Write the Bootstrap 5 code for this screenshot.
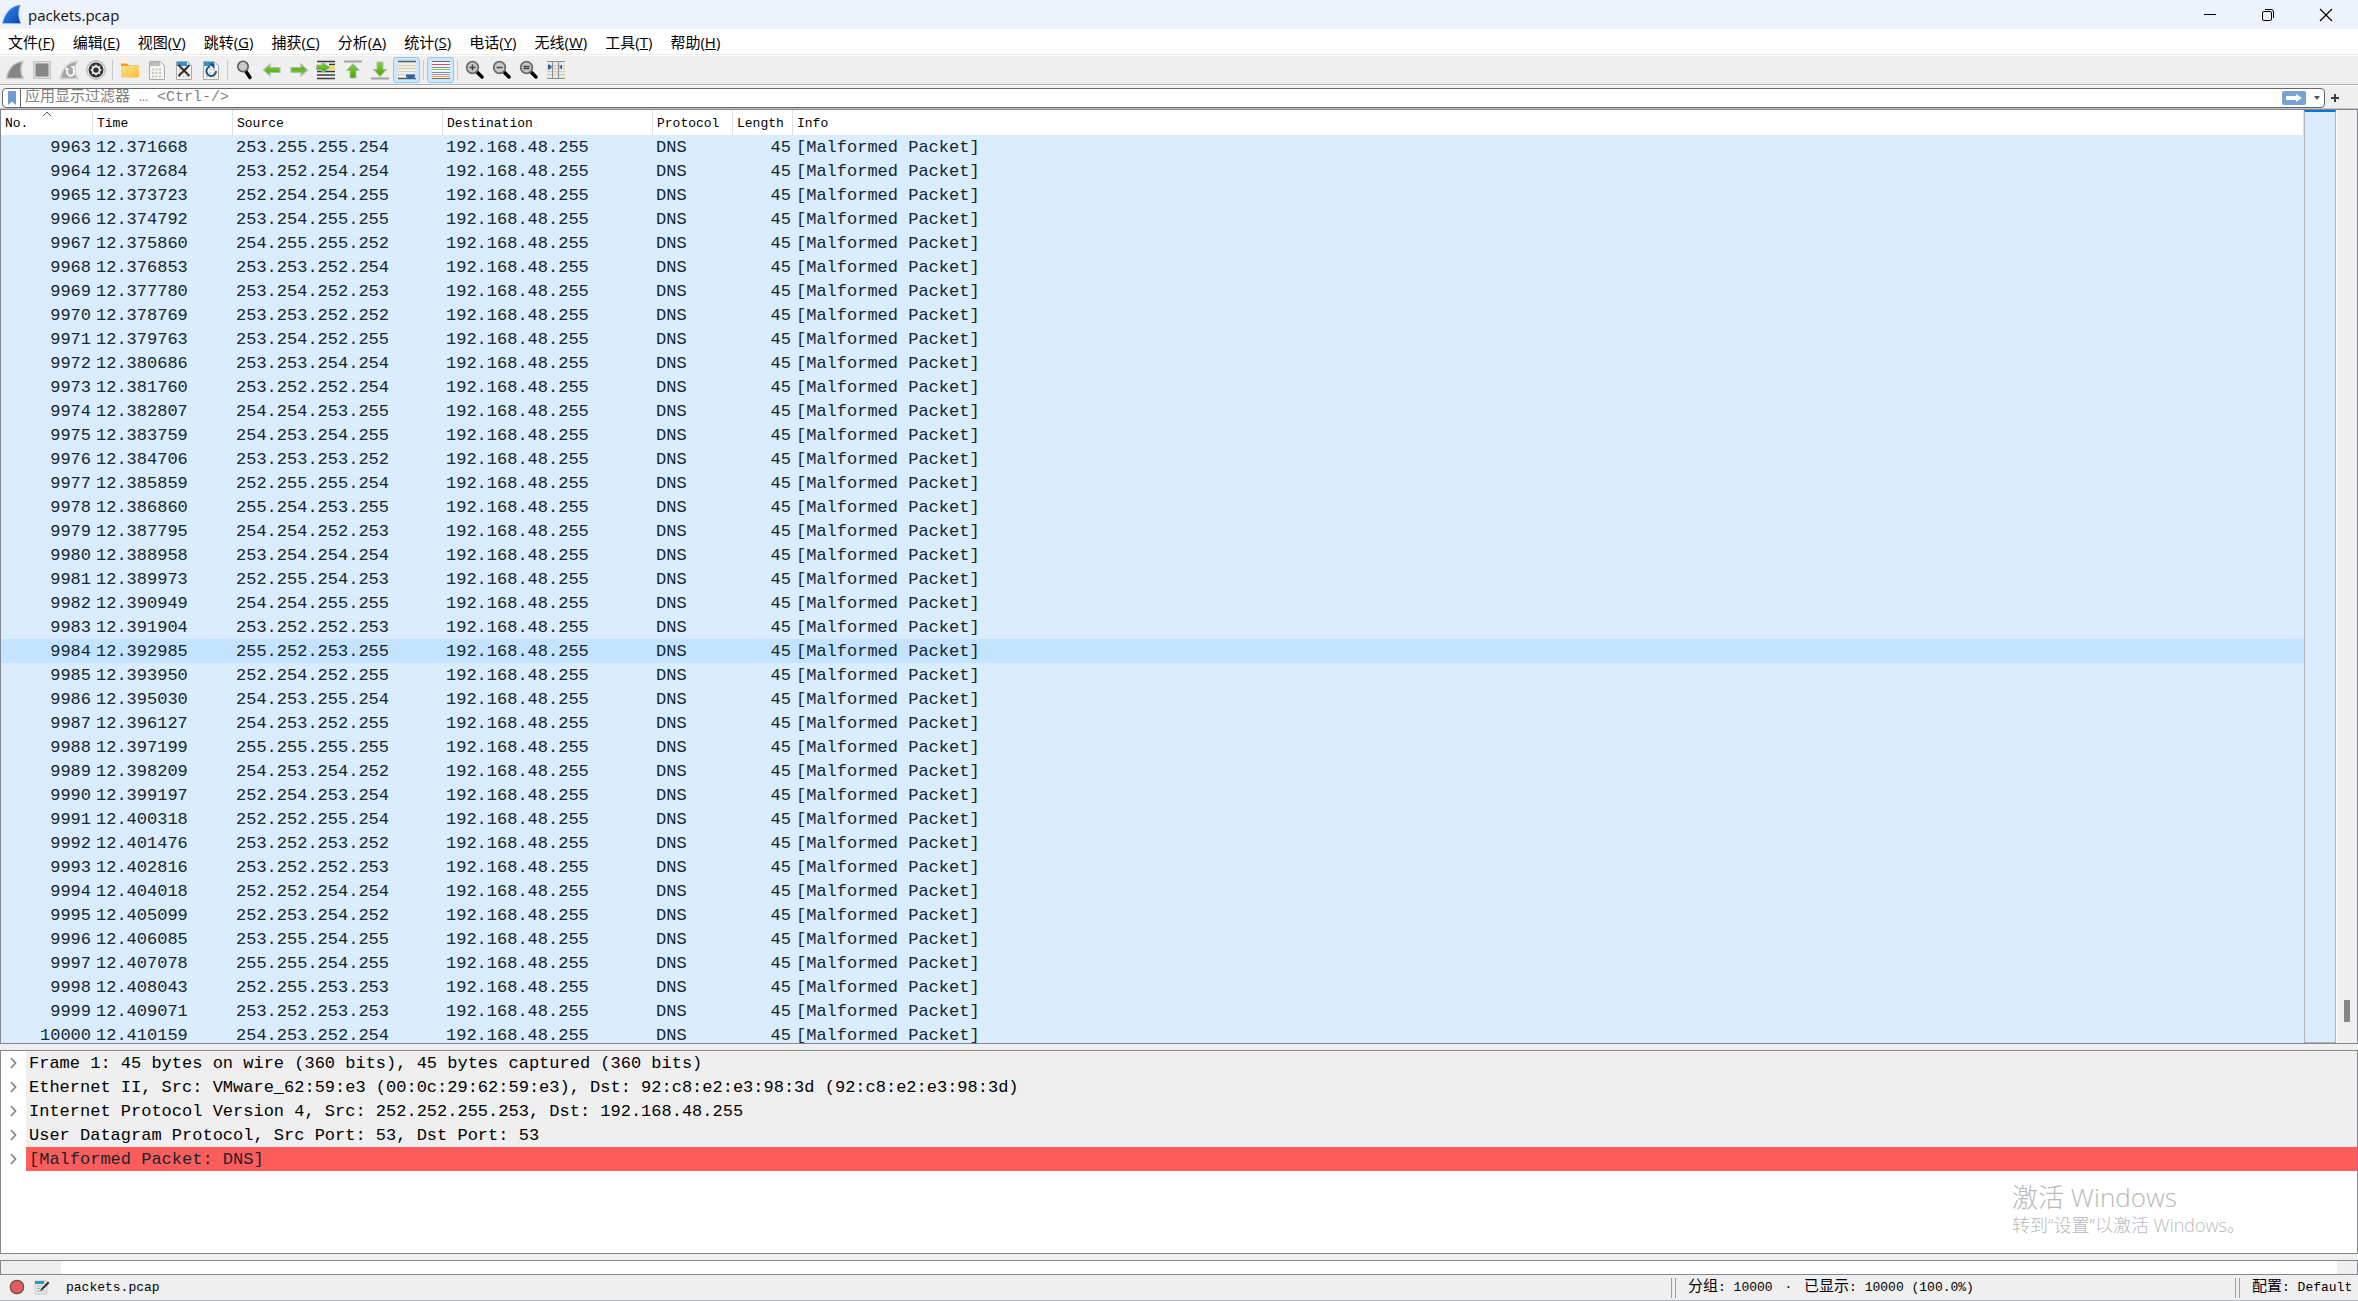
<!DOCTYPE html>
<html lang="zh-CN">
<head>
<meta charset="utf-8">
<meta name="viewport" content="width=device-width, initial-scale=1">
<title>packets.pcap</title>
<link href="https://cdn.jsdelivr.net/npm/bootstrap@5.3.0/dist/css/bootstrap.min.css" rel="stylesheet">
<style>
:root{--chrome:#efefef;--frame:#828790;--row:#daedff}
body{background:var(--chrome);color:#000;font-family:"Open Sans","Noto Sans CJK SC",sans-serif;font-size:15px;line-height:20px;overflow:hidden}
button,.filter-box input{border:0;background:none;padding:0;color:inherit;font:inherit}
svg{display:block;flex:none}
.titlebar{height:29px;background:#eef3fb;color:#111}
.win-controls{padding-right:3px}
.win-btn{width:58px;height:29px}
.menubar{height:27px;background:#fff;border-bottom:1px solid #fff;box-shadow:inset 0 -1px #ececec;padding:1px 0 0 8px;gap:18px}
.menubar a{color:#000;text-decoration:none;line-height:25px}
.toolbar{height:29px;border-bottom:1px solid #aeaeb0;padding-left:1px}
.tool{width:27px;height:26px;border-radius:4px}
.tool svg{margin:auto}
.tool.active{background:#cce8ff;box-shadow:inset 0 0 0 1px #90c8f6}
.tool-sep{width:1px;height:20px;margin:0 3px;background:#c9c9c9}
.filter-row{height:24px;padding:2px 0 2px 2px;border-top:1px solid #fff;box-shadow:inset 0 -1px #c4c4c8}
.filter-box{height:20px;background:#fff;border:1px solid #66666e;border-radius:4px}
.mark-btn{width:18px;height:18px;border-right:1px solid #66666e}
.sim{font-family:"Liberation Mono","Noto Sans CJK SC",monospace;font-size:13px}
.filter-box input{outline:0;height:18px;padding-left:4px;min-width:0;font-size:15px;font-family:"Liberation Mono","Noto Sans CJK SC",monospace}
.filter-box input::placeholder{color:#808080;opacity:1}
.apply{width:24px;height:14px;border-radius:2px;background:#78a2d2!important}
.add-btn{width:20px;margin-right:13px}
.framed{border:1px solid var(--frame)}
.mono{font-family:"Liberation Mono","Noto Sans CJK SC",monospace;font-size:17px;line-height:24px}
.pkt-scroll{background:var(--row)}
.pkt{table-layout:fixed;width:100%;border-collapse:separate;border-spacing:0;color:#12272e}
.pkt th{height:25px;line-height:23px;background:#fff;color:#000;font-weight:400;padding:2px 4px 0;border-right:1px solid #e2e2e2;white-space:nowrap}
.pkt td{height:24px;line-height:22px;padding:2px 2px 0 3px;white-space:nowrap;overflow:hidden}
.pkt .sel td{background:#c4e3ff}
.c-no{width:92px}.c-time{width:140px}.c-ip{width:210px}.c-proto{width:80px}.c-len{width:60px}
.sort-mark{top:1px;left:41px}
.minimap{width:32px;border:1px solid #b4b4b8;border-top:2px solid #0078d7;background:var(--row)}
.scroller{width:21px;border-left:1px solid #fff;padding-bottom:21px}
.thumb{width:6px;height:22px;background:#868686;margin-left:7px}
.details{height:204px;background:#fff;margin:6px 0}
.twist{width:25px;height:24px;background:#fff}
.layer{background:var(--chrome);padding:2px 0 0 3px;line-height:22px;white-space:pre}
.layer.bad{background:#ff5c5c;color:#12272e}
.watermark{right:112px;top:130px;color:#b9b9b9;font-family:"Open Sans","Noto Sans CJK SC",sans-serif;font-weight:300}
.wm-big{font-size:26px;line-height:32px}
.wm-small{font-size:18px;line-height:24px}
.bytes{height:15px;background:#fff}
.gutter-l{width:60px;background:var(--chrome)}
.gutter-r{width:20px;background:var(--chrome)}
.statusbar{height:26px;border-bottom:1px solid #b4b8c4}
.statusbar span:not(.grip){padding-top:1px}
.statusbar .cjk{font-size:15px}
.grip{width:5px;height:20px;border:solid #a0a0a0;border-width:0 1px}
.st-mid{width:559px;padding-left:12px}
.st-prof{width:118px;padding-left:12px}
</style>
<script src="https://cdn.jsdelivr.net/npm/bootstrap@5.3.0/dist/js/bootstrap.bundle.min.js"></script>
</head>
<body class="vh-100 d-flex flex-column">

<svg width="0" height="0" class="position-absolute" aria-hidden="true">
 <defs>
  <linearGradient id="blue" x1="0" y1="0" x2="1" y2="1"><stop offset="0" stop-color="#3b8df0"/><stop offset="1" stop-color="#0546b4"/></linearGradient>
  <linearGradient id="fold" x1="0" y1="0" x2="1" y2="1"><stop offset="0" stop-color="#ffe08a"/><stop offset="1" stop-color="#f8bd42"/></linearGradient>
  <linearGradient id="green" x1="0" y1="0" x2="0" y2="1"><stop offset="0" stop-color="#7fd13a"/><stop offset="1" stop-color="#48a50c"/></linearGradient>
  <g id="fin"><path d="M1.500 18.500C3 10 8 2 18 1.500c-3 6-3 11 .5 17z"/></g>
  <g id="sheet"><path d="M2.500 1.500h11l4 4v14h-15z" fill="#f6f6ee" stroke="#aaa"/></g>
  <g id="bits" stroke-width="2" stroke-dasharray="2 1.500"><path d="M5 9.500h10M5 13h10M5 16.500h10"/></g>
  <g id="lens"><path d="M12 12l5 5" stroke="#000" stroke-width="3.500" stroke-linecap="round"/><circle cx="7.500" cy="7.500" r="5.800" fill="#c9c9c9" stroke="#6c6c6c" stroke-width="1.800"/></g>
  <path id="arr" d="M1.500 10L8 4v3.500h10v5H8V16z" fill="url(#green)" stroke="#b4bbae" stroke-width="1.200"/>
  <path id="chev" d="M2 1l4.500 5L2 11" fill="none" stroke="#858585" stroke-width="1.700"/>
 </defs>
</svg>

<header class="titlebar d-flex align-items-center flex-shrink-0">
 <svg width="24" height="29" viewBox="0 0 24 29"><path d="M2.500 23.500C4 15 10 5.500 20.500 5c-2.500 6-2.500 12 .5 18.500z" fill="url(#blue)" stroke="#a9c8ee" stroke-width=".6"/></svg>
 <span class="ms-1">packets.pcap</span>
 <div class="win-controls ms-auto d-flex">
  <button class="win-btn" aria-label="最小化"><svg class="mx-auto" width="14" height="14" viewBox="0 0 14 14"><path d="M1 6.500h12" stroke="#000"/></svg></button>
  <button class="win-btn" aria-label="还原"><svg class="mx-auto" width="14" height="14" viewBox="0 0 14 14" fill="none" stroke="#000"><rect x="1.500" y="3.500" width="9" height="9" rx="1.500"/><path d="M4 1.500h6a2.500 2.500 0 0 1 2.500 2.500v6"/></svg></button>
  <button class="win-btn" aria-label="关闭"><svg class="mx-auto" width="14" height="14" viewBox="0 0 14 14"><path d="M1 1l12 12M13 1L1 13" stroke="#000" stroke-width="1.200"/></svg></button>
 </div>
</header>

<nav class="menubar d-flex flex-shrink-0">
 <a href="#">文件(<u>F</u>)</a><a href="#">编辑(<u>E</u>)</a><a href="#">视图(<u>V</u>)</a><a href="#">跳转(<u>G</u>)</a><a href="#">捕获(<u>C</u>)</a><a href="#">分析(<u>A</u>)</a><a href="#">统计(<u>S</u>)</a><a href="#">电话(<u>Y</u>)</a><a href="#">无线(<u>W</u>)</a><a href="#">工具(<u>T</u>)</a><a href="#">帮助(<u>H</u>)</a>
</nav>

<div class="toolbar d-flex align-items-center flex-shrink-0" role="toolbar">
 <button class="tool" aria-label="开始捕获"><svg width="20" height="20" viewBox="0 0 20 20"><use href="#fin" fill="#858585" stroke="#c8c8c8" stroke-width="1.500"/></svg></button>
 <button class="tool" aria-label="停止捕获"><svg width="20" height="20" viewBox="0 0 20 20"><rect x="1.500" y="1.500" width="17" height="17" fill="#ddd" stroke="#c4c4c4"/><rect x="3.500" y="3.500" width="13" height="13" fill="#868686"/></svg></button>
 <button class="tool" aria-label="重新开始捕获"><svg width="20" height="20" viewBox="0 0 20 20"><use href="#fin" fill="#a6a6a6" stroke="#cfcfcf" stroke-width="1.500"/><path d="M8.500 10.500a3.500 3.500 0 1 0 5.500-1" fill="none" stroke="#fff" stroke-width="1.800"/><path d="M10.500 10H6.500V6.500zM11.500 6h4v4.500z" fill="#fff"/></svg></button>
 <button class="tool" aria-label="捕获选项"><svg width="20" height="20" viewBox="0 0 20 20"><circle cx="10" cy="10" r="9.300" fill="#e4e4e4" stroke="#aaa"/><circle cx="10" cy="10" r="7.400" fill="#303030"/><circle cx="10" cy="10" r="3.600" fill="none" stroke="#e8e8e8" stroke-width="2"/><path d="M10 4.500v11M4.500 10h11M6.100 6.100l7.800 7.800M13.900 6.100l-7.800 7.800" stroke="#e8e8e8" stroke-width="1.500"/><circle cx="10" cy="10" r="2.600" fill="#303030"/></svg></button>
 <span class="tool-sep"></span>
 <button class="tool" aria-label="打开"><svg width="20" height="20" viewBox="0 0 20 20"><path d="M1 4.500a1 1 0 0 1 1-1h5l2 2h9a1 1 0 0 1 1 1V10H1z" fill="#e8a317"/><rect x="1" y="6" width="18" height="11.500" rx="1" fill="url(#fold)"/></svg></button>
 <button class="tool" aria-label="保存"><svg width="20" height="20" viewBox="0 0 20 20"><use href="#sheet"/><path d="M3 2h10l4 4H3z" fill="#bcbcbc"/><path d="M13 2v4h4z" fill="#eee"/><use href="#bits" stroke="#c6c6c6"/></svg></button>
 <button class="tool" aria-label="关闭文件"><svg width="20" height="20" viewBox="0 0 20 20"><use href="#sheet"/><path d="M3 2h10l4 4H3z" fill="#2c93cf"/><path d="M13 2v4h4z" fill="#fff"/><use href="#bits" stroke="#c9c9bd"/><path d="M4.500 5l11 11M15.500 5l-11 11" stroke="#2b2b33" stroke-width="2"/></svg></button>
 <button class="tool" aria-label="重新加载"><svg width="20" height="20" viewBox="0 0 20 20"><use href="#sheet"/><path d="M3 2h10l4 4H3z" fill="#2c93cf"/><path d="M13 2v4h4z" fill="#fff"/><use href="#bits" stroke="#c9c9bd"/><path d="M9 6.500a4.800 4.800 0 1 0 6 4.500" fill="none" stroke="#204f8f" stroke-width="2"/><path d="M8 3.500h5.500V9z" fill="#204f8f"/></svg></button>
 <span class="tool-sep"></span>
 <button class="tool" aria-label="查找"><svg width="20" height="20" viewBox="0 0 20 20"><path d="M11 11.500l4 6" stroke="#000" stroke-width="3.500" stroke-linecap="round"/><circle cx="8" cy="6.500" r="5.200" fill="#c9c9c9" stroke="#5c5c5c" stroke-width="1.600"/></svg></button>
 <button class="tool" aria-label="上一分组"><svg width="20" height="20" viewBox="0 0 20 20"><use href="#arr"/></svg></button>
 <button class="tool" aria-label="下一分组"><svg width="20" height="20" viewBox="0 0 20 20"><use href="#arr" transform="rotate(180 10 10)"/></svg></button>
 <button class="tool" aria-label="转到分组"><svg width="20" height="20" viewBox="0 0 20 20"><path d="M1 1.500h18M13 4.500h6M1 11.500h18M1 15h18M1 18.500h18" stroke="#3b3b3b" stroke-width="1.300"/><path d="M12 8h7" stroke="#f5d93c" stroke-width="3"/><path d="M.5 5H6V2l8 5.500L6 13v-3H.5z" fill="url(#green)" stroke="#b0b8a8"/></svg></button>
 <button class="tool" aria-label="第一个分组"><svg width="20" height="20" viewBox="0 0 20 20"><path d="M1 1.500h18" stroke="#a3a3a3" stroke-width="2"/><path d="M10 3.500l6.500 7H13V18H7v-7.500H3.500z" fill="url(#green)" stroke="#b4bbae"/></svg></button>
 <button class="tool" aria-label="最后一个分组"><svg width="20" height="20" viewBox="0 0 20 20"><path d="M1 18.500h18" stroke="#a3a3a3" stroke-width="2"/><path d="M10 16.500l6.500-7H13V2H7v7.500H3.500z" fill="url(#green)" stroke="#b4bbae"/></svg></button>
 <button class="tool active" aria-label="自动滚动"><svg width="20" height="20" viewBox="0 0 20 20"><path d="M1 2h18v17H1z" fill="#eeeee6"/><path d="M1 5.500h18M1 8.500h18M1 11.500h18M1 14.500h18" stroke="#cfcfc4"/><path d="M1 1.500h18M1 18.500h18" stroke="#5b5b5b" stroke-width="1.300"/><path d="M9 14.500h9v2L15.500 19h-4L9 16.500z" fill="#2f62ac"/></svg></button>
 <span class="tool-sep"></span>
 <button class="tool active" aria-label="着色"><svg width="20" height="20" viewBox="0 0 20 20"><path d="M1 2h18v17H1z" fill="#f6f6f2"/><path d="M1 1.500h18M1 18.500h18" stroke="#6b6b6b"/><path d="M1 4.500h18" stroke="#ef4a4a"/><path d="M1 7.500h18" stroke="#6b8fc4"/><path d="M1 9.500h18" stroke="#82cc4a"/><path d="M1 12.500h18" stroke="#6b8fc4"/><path d="M1 14.500h18" stroke="#ae8cc4"/><path d="M1 16.500h18" stroke="#d9a52c"/></svg></button>
 <span class="tool-sep"></span>
 <button class="tool" aria-label="放大"><svg width="20" height="20" viewBox="0 0 20 20"><use href="#lens"/><path d="M4.500 7.500h6M7.500 4.500v6" stroke="#444" stroke-width="1.500"/></svg></button>
 <button class="tool" aria-label="缩小"><svg width="20" height="20" viewBox="0 0 20 20"><use href="#lens"/><path d="M4.500 7.500h6" stroke="#444" stroke-width="1.500"/></svg></button>
 <button class="tool" aria-label="正常大小"><svg width="20" height="20" viewBox="0 0 20 20"><use href="#lens"/><path d="M4.500 6.500h6M4.500 8.500h6" stroke="#444" stroke-width="1.300"/></svg></button>
 <button class="tool" aria-label="调整列宽"><svg width="20" height="20" viewBox="0 0 20 20"><path d="M1 2h18v17H1z" fill="#e9e9e0"/><path d="M1 5.500h18M1 8.500h18M1 11.500h18M1 14.500h18" stroke="#cfcfc4"/><path d="M1 1.500h18M1 18.500h18M6.500 2v16M12.500 2v16" stroke="#8d8d8d"/><path d="M2 4.500h1.500L6 7 3.500 9.500H2zM16 4.500L13 7l3 2.500z" fill="#2f62ac"/></svg></button>
</div>

<form class="filter-row d-flex flex-shrink-0" onsubmit="return false">
 <div class="filter-box d-flex align-items-center flex-grow-1">
  <button type="button" class="mark-btn" aria-label="书签"><svg class="ms-1" width="10" height="16" viewBox="0 0 10 16"><path d="M1 1h8v14l-4-3.500L1 15z" fill="#6f9bd0"/></svg></button>
  <input class="flex-grow-1" type="text" aria-label="显示过滤器" placeholder="应用显示过滤器 … &lt;Ctrl-/&gt;">
  <button class="apply" aria-label="应用"><svg width="24" height="14" viewBox="0 0 24 14"><path d="M4 5h10V3l6 4-6 4V9H4z" fill="#fff"/></svg></button>
  <button type="button" class="ps-2 pe-1" aria-label="历史"><svg width="6" height="4" viewBox="0 0 6 4"><path d="M0 0h6L3 4z" fill="#555"/></svg></button>
 </div>
 <button type="button" class="add-btn" aria-label="添加"><svg class="mx-auto" width="10" height="18" viewBox="0 0 10 18"><path d="M5 5v8M1 9h8" stroke="#3c3c3c" stroke-width="2"/></svg></button>
</form>

<main class="d-flex flex-column flex-grow-1 overflow-hidden">
 <section class="framed d-flex flex-grow-1 overflow-hidden">
  <div class="pkt-scroll flex-grow-1 overflow-hidden">
   <table class="pkt mono">
    <colgroup><col class="c-no"><col class="c-time"><col class="c-ip"><col class="c-ip"><col class="c-proto"><col class="c-len"><col></colgroup>
    <thead><tr class="sim"><th class="position-relative">No.<svg class="sort-mark position-absolute" width="10" height="6" viewBox="0 0 10 6"><path d="M1 5l4-4 4 4" fill="none" stroke="#555"/></svg></th><th>Time</th><th>Source</th><th>Destination</th><th>Protocol</th><th>Length</th><th>Info</th></tr></thead>
    <tbody id="packets"></tbody>
   </table>
  </div>
  <div class="minimap flex-shrink-0"></div>
  <div class="scroller flex-shrink-0 d-flex flex-column justify-content-end"><div class="thumb"></div></div>
 </section>

 <section class="details framed mono position-relative flex-shrink-0">
  <div class="d-flex"><button class="twist" aria-label="展开"><svg class="ms-2" width="8" height="12" viewBox="0 0 8 12"><use href="#chev"/></svg></button><div class="layer flex-grow-1">Frame 1: 45 bytes on wire (360 bits), 45 bytes captured (360 bits)</div></div>
  <div class="d-flex"><button class="twist" aria-label="展开"><svg class="ms-2" width="8" height="12" viewBox="0 0 8 12"><use href="#chev"/></svg></button><div class="layer flex-grow-1">Ethernet II, Src: VMware_62:59:e3 (00:0c:29:62:59:e3), Dst: 92:c8:e2:e3:98:3d (92:c8:e2:e3:98:3d)</div></div>
  <div class="d-flex"><button class="twist" aria-label="展开"><svg class="ms-2" width="8" height="12" viewBox="0 0 8 12"><use href="#chev"/></svg></button><div class="layer flex-grow-1">Internet Protocol Version 4, Src: 252.252.255.253, Dst: 192.168.48.255</div></div>
  <div class="d-flex"><button class="twist" aria-label="展开"><svg class="ms-2" width="8" height="12" viewBox="0 0 8 12"><use href="#chev"/></svg></button><div class="layer flex-grow-1">User Datagram Protocol, Src Port: 53, Dst Port: 53</div></div>
  <div class="d-flex"><button class="twist" aria-label="展开"><svg class="ms-2" width="8" height="12" viewBox="0 0 8 12"><use href="#chev"/></svg></button><div class="layer bad flex-grow-1">[Malformed Packet: DNS]</div></div>
  <div class="watermark position-absolute"><div class="wm-big">激活 Windows</div><div class="wm-small">转到“设置”以激活 Windows。</div></div>
 </section>

 <section class="bytes framed d-flex flex-shrink-0 justify-content-between"><div class="gutter-l"></div><div class="gutter-r"></div></section>
</main>

<footer class="statusbar sim d-flex align-items-center flex-shrink-0">
 <button class="ms-2" aria-label="专家信息"><svg width="18" height="18" viewBox="0 0 18 18"><circle cx="9" cy="8" r="6.700" fill="#e35d5d" stroke="#6e4a4a" stroke-width="1.200"/></svg></button>
 <button class="ms-2" aria-label="注释"><svg width="16" height="18" viewBox="0 0 16 18"><path d="M1 2h12v13H1z" fill="#e9ebe6" stroke="#c6cbc6"/><path d="M1 2h9v3H1z" fill="#2c93cf"/><path d="M3 7h4M3 9.500h3M3 12h8" stroke="#aab"/><path d="M14 2.500L7.500 9 6 12l3-1.500L15.500 4z" fill="#333"/></svg></button>
 <span class="ms-3">packets.pcap</span>
 <div class="grip ms-auto"></div>
 <span class="st-mid"><span class="cjk">分组</span>: 10000 <span class="mx-1">·</span> <span class="cjk">已显示</span>: 10000 (100.0%)</span>
 <div class="grip"></div>
 <span class="st-prof"><span class="cjk">配置</span>: Default</span>
</footer>

<script>
const packets = `9963 12.371668 253.255.255.254
9964 12.372684 253.252.254.254
9965 12.373723 252.254.254.255
9966 12.374792 253.254.255.255
9967 12.375860 254.255.255.252
9968 12.376853 253.253.252.254
9969 12.377780 253.254.252.253
9970 12.378769 253.253.252.252
9971 12.379763 253.254.252.255
9972 12.380686 253.253.254.254
9973 12.381760 253.252.252.254
9974 12.382807 254.254.253.255
9975 12.383759 254.253.254.255
9976 12.384706 253.253.253.252
9977 12.385859 252.255.255.254
9978 12.386860 255.254.253.255
9979 12.387795 254.254.252.253
9980 12.388958 253.254.254.254
9981 12.389973 252.255.254.253
9982 12.390949 254.254.255.255
9983 12.391904 253.252.252.253
9984 12.392985 255.252.253.255
9985 12.393950 252.254.252.255
9986 12.395030 254.253.255.254
9987 12.396127 254.253.252.255
9988 12.397199 255.255.255.255
9989 12.398209 254.253.254.252
9990 12.399197 252.254.253.254
9991 12.400318 252.252.255.254
9992 12.401476 253.252.253.252
9993 12.402816 253.252.252.253
9994 12.404018 252.252.254.254
9995 12.405099 252.253.254.252
9996 12.406085 253.255.254.255
9997 12.407078 255.255.254.255
9998 12.408043 252.255.253.253
9999 12.409071 253.252.253.253
10000 12.410159 254.253.252.254`;
document.getElementById('packets').innerHTML = packets.split('\n').map(line => {
  const [no, time, src] = line.split(' ');
  return `<tr${no === '9984' ? ' class="sel"' : ''}><td class="text-end">${no}</td><td>${time}</td><td>${src}</td><td>192.168.48.255</td><td>DNS</td><td class="text-end">45</td><td>[Malformed Packet]</td></tr>`;
}).join('');
</script>
</body>
</html>
